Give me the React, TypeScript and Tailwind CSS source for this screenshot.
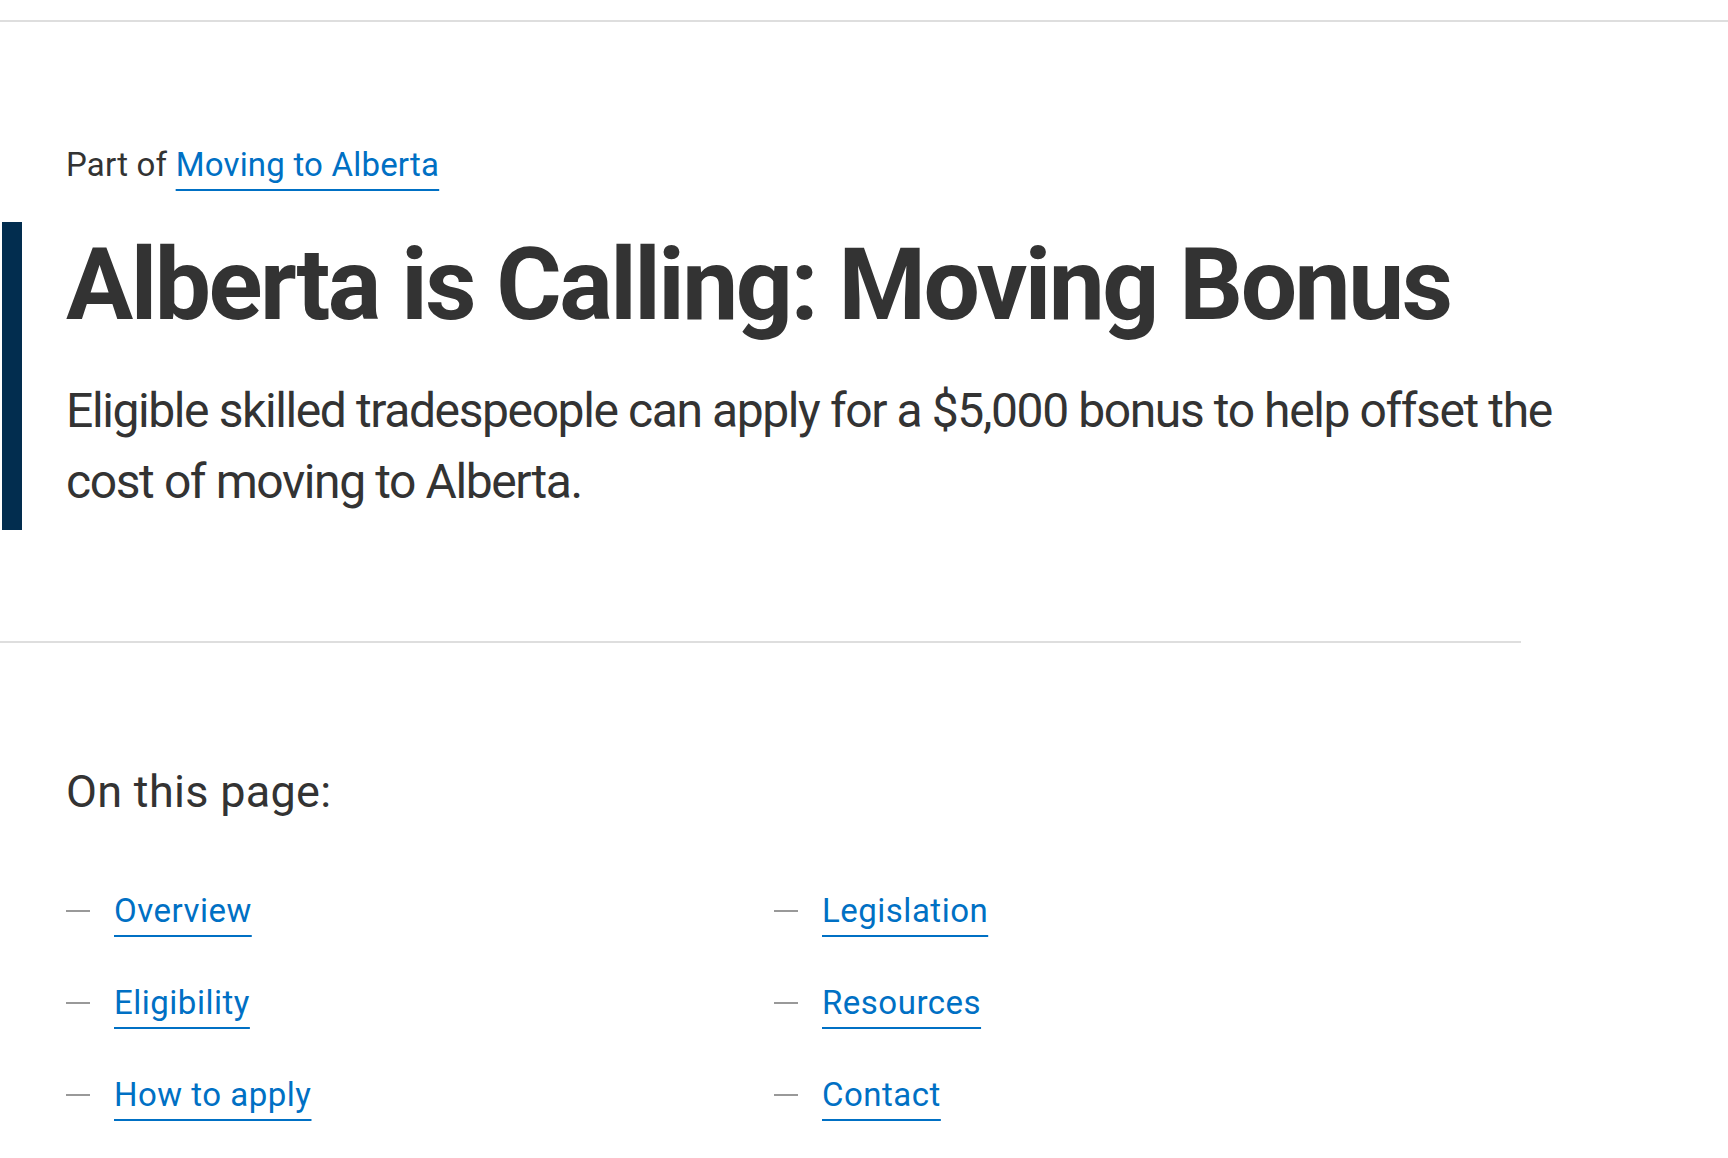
import React from "react";

const links: [string, string][] = [
  ["Overview", "Legislation"],
  ["Eligibility", "Resources"],
  ["How to apply", "Contact"],
];

function TocItem({ label }: { label: string }) {
  return (
    <li className="flex items-center h-[48px]">
      <span className="block w-[24px] h-[2px] bg-[#999999] shrink-0" />
      <a
        href="#"
        className="ml-[24px] text-[#0070c4] underline decoration-2 underline-offset-[13px]"
      >
        {label}
      </a>
    </li>
  );
}

export default function App() {
  return (
    <div className="min-h-screen bg-white text-[#333333] font-['Roboto',sans-serif]">
      <div className="h-[22px] border-b-2 border-[#dedede]" />
      <main className="pt-[119px]">
        <p className="pl-[66px] text-[33px] leading-[48px] tracking-[0.2px]">
          Part of{" "}
          <a
            href="#"
            className="text-[#0070c4] underline decoration-2 underline-offset-[13px]"
          >
            Moving to Alberta
          </a>
        </p>

        <div className="mt-[33px] ml-[2px] border-l-[20px] border-[#022d4f] pl-[44px] pt-[3px] pb-[13px]">
          <h1 className="text-[100px] font-bold leading-[120px] tracking-[-2.5px]">
            Alberta is Calling: Moving Bonus
          </h1>
          <p className="mt-[30px] max-w-[1520px] text-[48px] leading-[71px] tracking-[-1.4px]">
            Eligible skilled tradespeople can apply for a $5,000 bonus to help
            offset the cost of moving to Alberta.
          </p>
        </div>

        <div className="mt-[111px] w-[1521px] h-[2px] bg-[#dedede]" />

        <section className="pl-[66px] mt-[122px]">
          <h2 className="text-[45px] leading-[53px] tracking-[0.3px]">On this page:</h2>
          <ul className="mt-[69px] grid grid-cols-[708px_1fr] gap-y-[44px] text-[33px] leading-[48px] tracking-[0.5px]">
            {links.map(([a, b]) => (
              <React.Fragment key={a}>
                <TocItem label={a} />
                <TocItem label={b} />
              </React.Fragment>
            ))}
          </ul>
        </section>
      </main>
    </div>
  );
}
